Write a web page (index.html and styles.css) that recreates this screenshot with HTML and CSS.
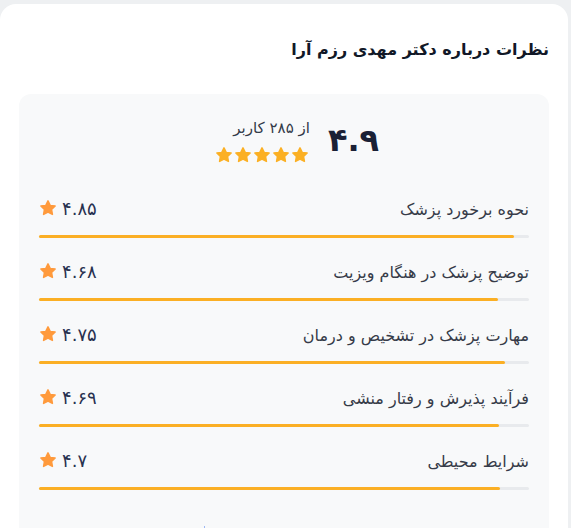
FILE: index.html
```html
<!DOCTYPE html>
<html lang="fa" dir="rtl">
<head>
    <meta charset="UTF-8">
    <meta name="viewport" content="width=device-width, initial-scale=1.0">
    <title>نظرات</title>
    <link rel="stylesheet" href="styles.css">
</head>
<body>

    <div class="card">
        <h2 class="title">نظرات درباره دکتر مهدی رزم آرا</h2>

        <div class="panel">
            <div class="summary">
                <div class="score">۴.۹</div>
                <div class="summary-info">
                    <div class="count">از ۲۸۵ کاربر</div>
                    <div class="stars">
                        <svg viewBox="0 0 24 24"><path d="M12 2.5l2.9 6 6.6.9-4.8 4.6 1.2 6.5L12 17.4l-5.9 3.1 1.2-6.5-4.8-4.6 6.6-.9z"/></svg>
                        <svg viewBox="0 0 24 24"><path d="M12 2.5l2.9 6 6.6.9-4.8 4.6 1.2 6.5L12 17.4l-5.9 3.1 1.2-6.5-4.8-4.6 6.6-.9z"/></svg>
                        <svg viewBox="0 0 24 24"><path d="M12 2.5l2.9 6 6.6.9-4.8 4.6 1.2 6.5L12 17.4l-5.9 3.1 1.2-6.5-4.8-4.6 6.6-.9z"/></svg>
                        <svg viewBox="0 0 24 24"><path d="M12 2.5l2.9 6 6.6.9-4.8 4.6 1.2 6.5L12 17.4l-5.9 3.1 1.2-6.5-4.8-4.6 6.6-.9z"/></svg>
                        <svg viewBox="0 0 24 24"><path d="M12 2.5l2.9 6 6.6.9-4.8 4.6 1.2 6.5L12 17.4l-5.9 3.1 1.2-6.5-4.8-4.6 6.6-.9z"/></svg>
                    </div>
                </div>
            </div>

            <div class="item">
                <div class="item-head">
                    <span class="label">نحوه برخورد پزشک</span>
                    <span class="value">۴.۸۵ <svg viewBox="0 0 24 24"><path d="M12 2.5l2.9 6 6.6.9-4.8 4.6 1.2 6.5L12 17.4l-5.9 3.1 1.2-6.5-4.8-4.6 6.6-.9z"/></svg></span>
                </div>
                <div class="track"><div class="fill" style="width: 97%"></div></div>
            </div>

            <div class="item">
                <div class="item-head">
                    <span class="label">توضیح پزشک در هنگام ویزیت</span>
                    <span class="value">۴.۶۸ <svg viewBox="0 0 24 24"><path d="M12 2.5l2.9 6 6.6.9-4.8 4.6 1.2 6.5L12 17.4l-5.9 3.1 1.2-6.5-4.8-4.6 6.6-.9z"/></svg></span>
                </div>
                <div class="track"><div class="fill" style="width: 93.6%"></div></div>
            </div>

            <div class="item">
                <div class="item-head">
                    <span class="label">مهارت پزشک در تشخیص و درمان</span>
                    <span class="value">۴.۷۵ <svg viewBox="0 0 24 24"><path d="M12 2.5l2.9 6 6.6.9-4.8 4.6 1.2 6.5L12 17.4l-5.9 3.1 1.2-6.5-4.8-4.6 6.6-.9z"/></svg></span>
                </div>
                <div class="track"><div class="fill" style="width: 95%"></div></div>
            </div>

            <div class="item">
                <div class="item-head">
                    <span class="label">فرآیند پذیرش و رفتار منشی</span>
                    <span class="value">۴.۶۹ <svg viewBox="0 0 24 24"><path d="M12 2.5l2.9 6 6.6.9-4.8 4.6 1.2 6.5L12 17.4l-5.9 3.1 1.2-6.5-4.8-4.6 6.6-.9z"/></svg></span>
                </div>
                <div class="track"><div class="fill" style="width: 93.8%"></div></div>
            </div>

            <div class="item">
                <div class="item-head">
                    <span class="label">شرایط محیطی</span>
                    <span class="value">۴.۷ <svg viewBox="0 0 24 24"><path d="M12 2.5l2.9 6 6.6.9-4.8 4.6 1.2 6.5L12 17.4l-5.9 3.1 1.2-6.5-4.8-4.6 6.6-.9z"/></svg></span>
                </div>
                <div class="track"><div class="fill" style="width: 94%"></div></div>
            </div>

            <div class="filters">
                <span>پیشنهاد می‌کنم</span>
                <span>کیفیت درمان</span>
                <span class="divider"></span>
                <span>زمان انتظار</span>
            </div>
        </div>
    </div>

</body>
</html>
```

FILE: styles.css
```css
body {
    font-family: "DejaVu Sans", "Noto Sans", sans-serif;
    background-color: #eef0f2;
    margin: 0;
    padding-top: 4px;
    color: #2c3040;
}
.card {
    background: #fff;
    border-radius: 16px;
    margin-right: 3px;
    padding: 34px 19px 20px 19px;
}
.title {
    font-size: 16px;
    font-weight: bold;
    line-height: 24px;
    margin: 0 0 32px 0;
    color: #111827;
}
.panel {
    background: #f8f9fa;
    border-radius: 12px;
    padding: 20px 20px 20px 20px;
}
.summary {
    display: flex;
    justify-content: center;
    align-items: flex-start;
    gap: 18px;
    padding-left: 26px;
    margin-bottom: 33px;
}
.score {
    font-size: 32px;
    font-weight: bold;
    color: #1a2035;
    line-height: 40px;
    margin-top: 6px;
}
.summary-info {
    display: flex;
    flex-direction: column;
    align-items: flex-start;
    padding-top: 4px;
}
.count {
    font-size: 15px;
    color: #333a48;
    line-height: 20px;
}
.stars {
    display: flex;
    gap: 1px;
    margin-top: 8px;
    margin-right: 1px;
    direction: ltr;
}
.stars svg {
    width: 18px;
    height: 18px;
    fill: #fbb024;
    stroke: #fbb024;
    stroke-width: 2;
    stroke-linejoin: round;
}
.item {
    margin-bottom: 22px;
}
.item-head {
    display: flex;
    justify-content: space-between;
    align-items: center;
    height: 24px;
    margin-bottom: 14px;
}
.label {
    font-size: 16px;
    color: #363b48;
}
.value {
    display: flex;
    align-items: center;
    gap: 5px;
    font-size: 18px;
    color: #283150;
    margin-top: -2px;
}
.value svg {
    width: 18px;
    height: 18px;
    fill: #ff9a3c;
    stroke: #ff9a3c;
    stroke-width: 2;
    stroke-linejoin: round;
}
.track {
    height: 3px;
    background: #e8eaed;
    border-radius: 2px;
    direction: ltr;
}
.fill {
    height: 100%;
    background: #fbaf24;
    border-radius: 2px;
}
.filters {
    display: flex;
    justify-content: space-around;
    align-items: center;
    margin-top: 36px;
    font-size: 14px;
    color: #444;
}
.divider {
    width: 1px;
    height: 24px;
    border-left: 1px dotted #9db8f5;
}
```
